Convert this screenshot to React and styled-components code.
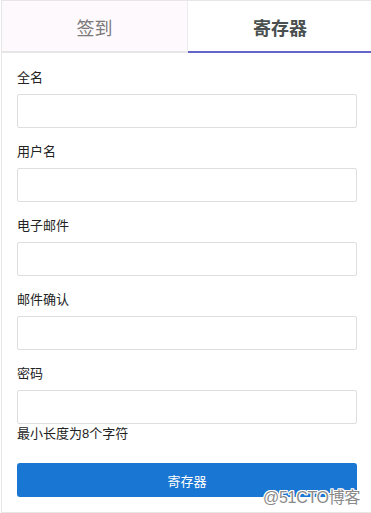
import React from "react";
import styled, { createGlobalStyle } from "styled-components";

const Global = createGlobalStyle`
  html, body { margin: 0; padding: 0; background: #fff; }
  body { font-family: "Liberation Sans", "Noto Sans CJK SC", sans-serif; }
  * { box-sizing: border-box; }
`;

const Card = styled.div`
  position: relative;
  margin-left: 1px;
  width: 372px;
  height: 513px;
  border: 1px solid #e6e6e6;
  background: #fff;
  display: flex;
  flex-direction: column;
`;

const Tabs = styled.div`
  display: flex;
  height: 52px;
`;

const Tab = styled.div`
  flex: ${(p) => (p.$active ? "0 0 184px" : "0 0 186px")};
  display: flex;
  align-items: center;
  justify-content: center;
  font-size: 18px;
  font-weight: ${(p) => (p.$active ? 700 : 400)};
  color: ${(p) => (p.$active ? "#4a4f4f" : "#7a7a7a")};
  background: ${(p) => (p.$active ? "#fff" : "#fdf9fd")};
  border-bottom: 2px solid ${(p) => (p.$active ? "#6565c8" : "#e6e6e6")};
  border-right: ${(p) => (p.$active ? "none" : "1px solid #ececec")};
  padding-top: 1px;
`;

const Form = styled.form`
  display: flex;
  flex-direction: column;
  padding: 15px 14px 0 15px;
`;

const Group = styled.div`
  display: flex;
  flex-direction: column;
  margin-bottom: ${(p) => (p.$last ? "0" : "14px")};
`;

const Label = styled.label`
  font-size: 13px;
  line-height: 20px;
  color: #222;
  margin-bottom: 6px;
`;

const Input = styled.input`
  width: 340px;
  height: 34px;
  border: 1px solid #dedede;
  border-radius: 2px;
  padding: 0 8px;
  font-size: 13px;
  outline: none;
  background: #fff;
`;

const Hint = styled.div`
  font-size: 13px;
  line-height: 18px;
  color: #222;
  margin-top: 1px;
`;

const Button = styled.button`
  margin-top: 20px;
  width: 340px;
  height: 34px;
  border: none;
  border-radius: 3px;
  background: #1976d2;
  color: #fff;
  font-family: "Liberation Sans", "Noto Sans CJK SC", sans-serif;
  font-size: 13px;
  cursor: pointer;
`;

const Watermark = styled.div`
  position: absolute;
  left: 261px;
  top: 483px;
  font-size: 16px;
  letter-spacing: -0.3px;
  color: #8a8a8a;
  white-space: nowrap;
  text-shadow: 1px 0 0 #fff, -1px 0 0 #fff, 0 1px 0 #fff, 0 -1px 0 #fff,
    1px 1px 0 #fff, -1px -1px 0 #fff, 1px -1px 0 #fff, -1px 1px 0 #fff;
`;

const fields = ["全名", "用户名", "电子邮件", "邮件确认", "密码"];

export default function App() {
  return (
    <>
      <Global />
      <Card>
        <Tabs>
          <Tab>签到</Tab>
          <Tab $active>寄存器</Tab>
        </Tabs>
        <Form onSubmit={(e) => e.preventDefault()}>
          {fields.map((f, i) => (
            <Group key={f} $last={i === fields.length - 1}>
              <Label>{f}</Label>
              <Input type={f === "密码" ? "password" : "text"} />
            </Group>
          ))}
          <Hint>最小长度为8个字符</Hint>
          <Button type="submit">寄存器</Button>
        </Form>
        <Watermark>@51CTO博客</Watermark>
      </Card>
    </>
  );
}
